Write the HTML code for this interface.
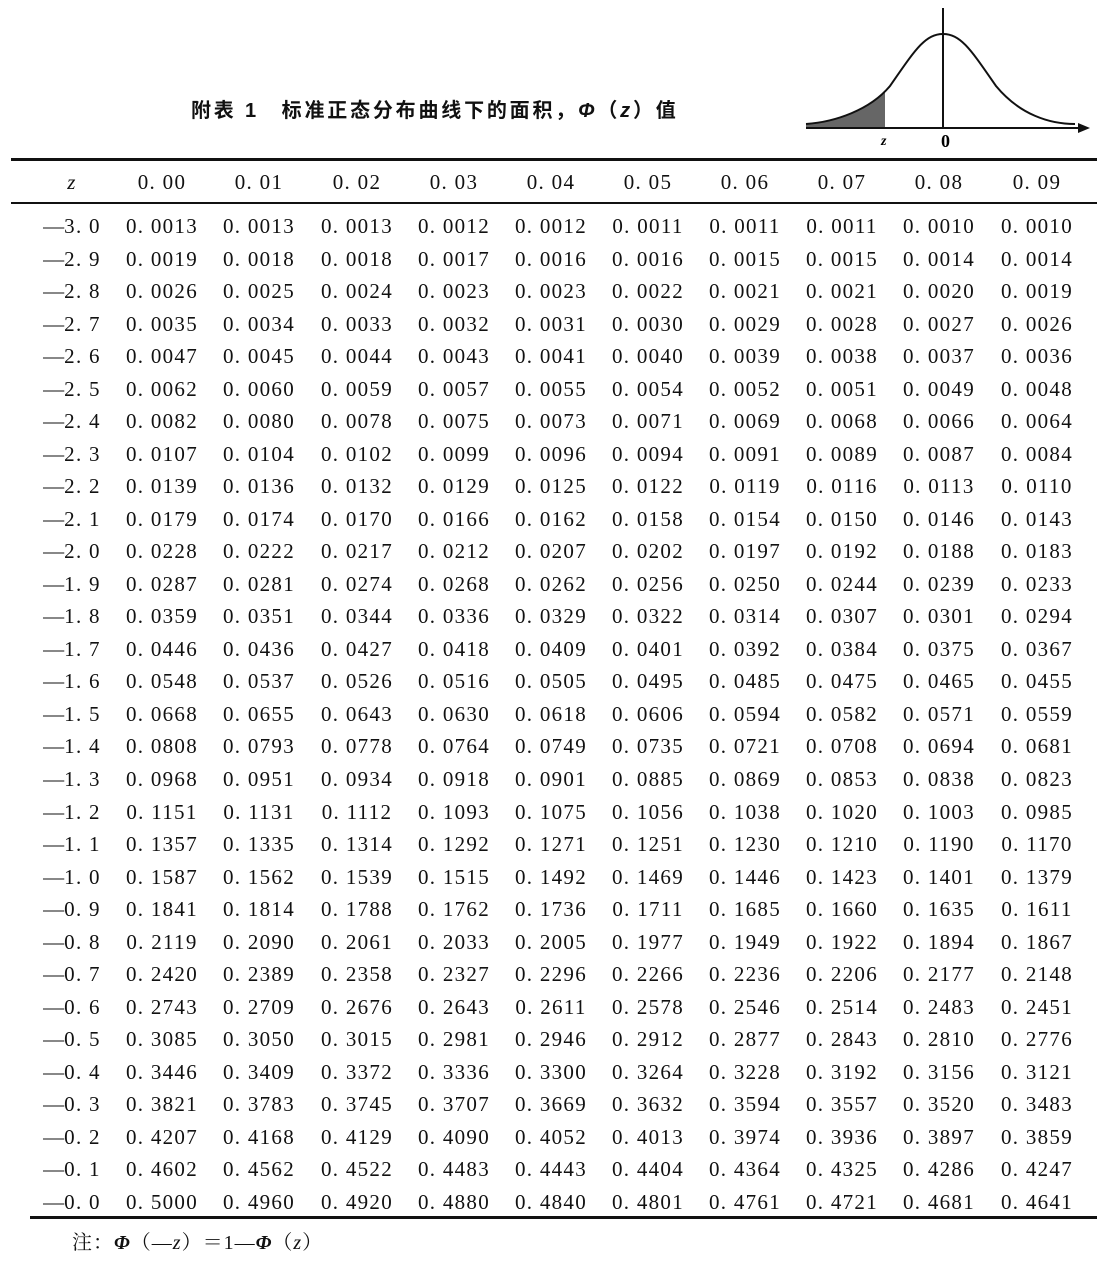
<!DOCTYPE html>
<html><head><meta charset="utf-8"><style>
body{margin:0;width:1116px;height:1264px;background:#fff;position:relative;font-family:"Liberation Serif","Noto Serif CJK SC",serif;color:#111;overflow:hidden}
.t{position:absolute;left:191px;top:94px;font-family:"Liberation Sans","Noto Sans CJK SC",sans-serif;font-weight:bold;font-size:20px;letter-spacing:2.8px}
.ln{position:absolute;background:#111}
.r{position:absolute;left:0;height:30px;width:1116px;font-size:21px;letter-spacing:1.3px}
.r span{position:absolute;top:0;width:100px;text-align:center;white-space:nowrap}
.note{position:absolute;left:72px;top:1226px;font-size:20px;letter-spacing:1px}
</style></head><body>
<div class="t">附表 1　标准正态分布曲线下的面积，<i>Φ</i>（<i>z</i>）值</div>
<svg style="position:absolute;left:0;top:0" width="1116" height="160">
<path d="M806,124 C835,122 865,112 885,92 L885,128 L806,128Z" fill="#666"/>
<path d="M806,124 C835,122 870,110 890,86 C915,50 925,34 943,34 C961,34 971,50 996,86 C1020,115 1050,124 1075,124" fill="none" stroke="#111" stroke-width="2"/>
<line x1="943" y1="8" x2="943" y2="128" stroke="#111" stroke-width="2"/>
<line x1="806" y1="128" x2="1084" y2="128" stroke="#111" stroke-width="2"/>
<path d="M1078,123 L1090,128 L1078,133Z" fill="#111"/>
<text x="881" y="145" font-size="14" font-style="italic" font-weight="bold" font-family="Liberation Serif">z</text>
<text x="941" y="147" font-size="18" font-weight="bold" font-family="Liberation Serif">0</text>
</svg>
<div class="ln" style="left:11px;top:158px;width:1086px;height:3px"></div>
<div class="ln" style="left:11px;top:202px;width:1086px;height:2px"></div>
<div class="ln" style="left:30px;top:1216px;width:1067px;height:3px"></div>
<div id="tb"></div>
<div class="note">注：<b><i>Φ</i></b>（—<i>z</i>）＝1—<b><i>Φ</i></b>（<i>z</i>）</div>
<script>
var d=[
"−3.0 0.0013 0.0013 0.0013 0.0012 0.0012 0.0011 0.0011 0.0011 0.0010 0.0010",
"−2.9 0.0019 0.0018 0.0018 0.0017 0.0016 0.0016 0.0015 0.0015 0.0014 0.0014",
"−2.8 0.0026 0.0025 0.0024 0.0023 0.0023 0.0022 0.0021 0.0021 0.0020 0.0019",
"−2.7 0.0035 0.0034 0.0033 0.0032 0.0031 0.0030 0.0029 0.0028 0.0027 0.0026",
"−2.6 0.0047 0.0045 0.0044 0.0043 0.0041 0.0040 0.0039 0.0038 0.0037 0.0036",
"−2.5 0.0062 0.0060 0.0059 0.0057 0.0055 0.0054 0.0052 0.0051 0.0049 0.0048",
"−2.4 0.0082 0.0080 0.0078 0.0075 0.0073 0.0071 0.0069 0.0068 0.0066 0.0064",
"−2.3 0.0107 0.0104 0.0102 0.0099 0.0096 0.0094 0.0091 0.0089 0.0087 0.0084",
"−2.2 0.0139 0.0136 0.0132 0.0129 0.0125 0.0122 0.0119 0.0116 0.0113 0.0110",
"−2.1 0.0179 0.0174 0.0170 0.0166 0.0162 0.0158 0.0154 0.0150 0.0146 0.0143",
"−2.0 0.0228 0.0222 0.0217 0.0212 0.0207 0.0202 0.0197 0.0192 0.0188 0.0183",
"−1.9 0.0287 0.0281 0.0274 0.0268 0.0262 0.0256 0.0250 0.0244 0.0239 0.0233",
"−1.8 0.0359 0.0351 0.0344 0.0336 0.0329 0.0322 0.0314 0.0307 0.0301 0.0294",
"−1.7 0.0446 0.0436 0.0427 0.0418 0.0409 0.0401 0.0392 0.0384 0.0375 0.0367",
"−1.6 0.0548 0.0537 0.0526 0.0516 0.0505 0.0495 0.0485 0.0475 0.0465 0.0455",
"−1.5 0.0668 0.0655 0.0643 0.0630 0.0618 0.0606 0.0594 0.0582 0.0571 0.0559",
"−1.4 0.0808 0.0793 0.0778 0.0764 0.0749 0.0735 0.0721 0.0708 0.0694 0.0681",
"−1.3 0.0968 0.0951 0.0934 0.0918 0.0901 0.0885 0.0869 0.0853 0.0838 0.0823",
"−1.2 0.1151 0.1131 0.1112 0.1093 0.1075 0.1056 0.1038 0.1020 0.1003 0.0985",
"−1.1 0.1357 0.1335 0.1314 0.1292 0.1271 0.1251 0.1230 0.1210 0.1190 0.1170",
"−1.0 0.1587 0.1562 0.1539 0.1515 0.1492 0.1469 0.1446 0.1423 0.1401 0.1379",
"−0.9 0.1841 0.1814 0.1788 0.1762 0.1736 0.1711 0.1685 0.1660 0.1635 0.1611",
"−0.8 0.2119 0.2090 0.2061 0.2033 0.2005 0.1977 0.1949 0.1922 0.1894 0.1867",
"−0.7 0.2420 0.2389 0.2358 0.2327 0.2296 0.2266 0.2236 0.2206 0.2177 0.2148",
"−0.6 0.2743 0.2709 0.2676 0.2643 0.2611 0.2578 0.2546 0.2514 0.2483 0.2451",
"−0.5 0.3085 0.3050 0.3015 0.2981 0.2946 0.2912 0.2877 0.2843 0.2810 0.2776",
"−0.4 0.3446 0.3409 0.3372 0.3336 0.3300 0.3264 0.3228 0.3192 0.3156 0.3121",
"−0.3 0.3821 0.3783 0.3745 0.3707 0.3669 0.3632 0.3594 0.3557 0.3520 0.3483",
"−0.2 0.4207 0.4168 0.4129 0.4090 0.4052 0.4013 0.3974 0.3936 0.3897 0.3859",
"−0.1 0.4602 0.4562 0.4522 0.4483 0.4443 0.4404 0.4364 0.4325 0.4286 0.4247",
"−0.0 0.5000 0.4960 0.4920 0.4880 0.4840 0.4801 0.4761 0.4721 0.4681 0.4641"];
var cx=[72,162,259,357,454,551,648,745,842,939,1037];
function row(cells,y){var h='<div class="r" style="top:'+y+'px">';
for(var i=0;i<cells.length;i++){var c=cells[i];
if(i==0&&c[0]=='−')c='<span style="position:static;width:auto;letter-spacing:0">—</span>'+c.slice(1).replace('.','. ');
else if(i>0)c=c.replace('.','. ');
h+='<span style="left:'+(cx[i]-50)+'px">'+c+'</span>';}return h+'</div>';}
var o=row(['<i>z</i>','0.00','0.01','0.02','0.03','0.04','0.05','0.06','0.07','0.08','0.09'],170);
for(var k=0;k<d.length;k++)o+=row(d[k].split(' '),214+k*32.53);
document.getElementById('tb').innerHTML=o;
</script>
</body></html>
